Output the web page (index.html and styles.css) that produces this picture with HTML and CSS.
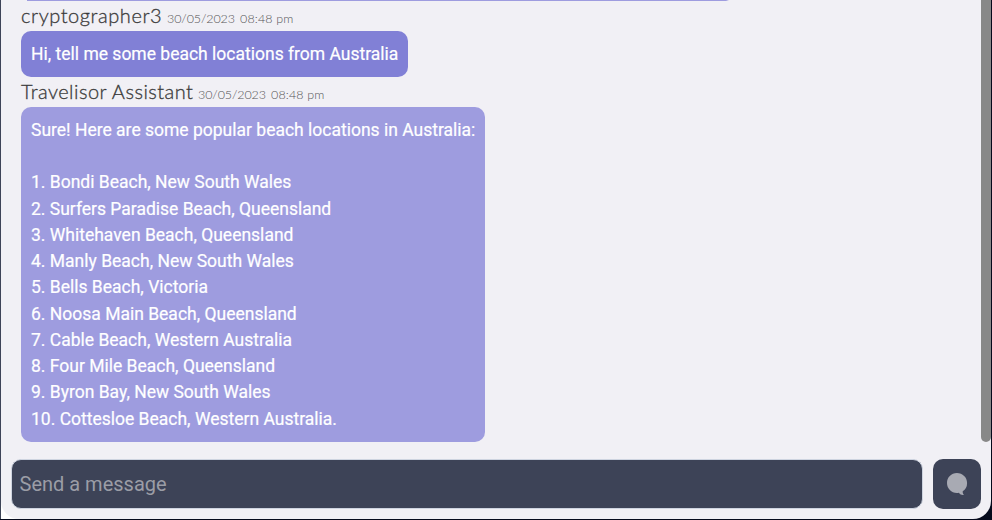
FILE: index.html
```
<!DOCTYPE html>
<html lang="en">
<head>
<meta charset="utf-8">
<title>Travelisor Chat</title>
<link rel="stylesheet" href="styles.css">
</head>
<body>
<div class="backdrop">
<main class="chat">
  <div class="history">
    <div class="messages">
      <div class="previous"></div>
      <header class="meta"><span class="name user">cryptographer3</span><span class="date">30/05/2023</span><span class="time">08:48 pm</span></header>
      <p class="bubble question">Hi, tell me some beach locations from Australia</p>
      <header class="meta"><span class="name assistant">Travelisor Assistant</span><span class="date">30/05/2023</span><span class="time">08:48 pm</span></header>
      <p class="bubble answer">Sure! Here are some popular beach locations in Australia:

1. Bondi Beach, New South Wales
2. Surfers Paradise Beach, Queensland
3. Whitehaven Beach, Queensland
4. Manly Beach, New South Wales
5. Bells Beach, Victoria
6. Noosa Main Beach, Queensland
7. Cable Beach, Western Australia
8. Four Mile Beach, Queensland
9. Byron Bay, New South Wales
10. Cottesloe Beach, Western Australia.</p>
    </div>
    <div class="scrollbar"></div>
  </div>
  <form class="composer">
    <input class="field" type="text" placeholder="Send a message" aria-label="Message">
    <button class="send" type="button" aria-label="Send">
      <svg width="22" height="24" viewBox="0 0 22 24"><path d="M10.900 1C5.300 1 1 5.400 1 10.900s4.300 10 9.900 10c.7 0 1.400-.1 2-.2 1.200 1.700 3 2.600 5.300 2.100-1.100-.7-1.600-1.900-1.500-3.600a10 10 0 0 0 4.400-8.300C21.100 5.400 16.600 1 10.900 1Z"/></svg>
    </button>
  </form>
</main>
</div>
</body>
</html>
```
FILE: styles.css
```
* { box-sizing: border-box; }
body { margin: 0; font-family: Roboto, sans-serif; overflow: hidden; }
.backdrop {
  height: 520px;
  padding: 0 1px 1px 0;
  background: linear-gradient(90deg, #fff 50%, #050a1c 50%);
  border-left: 1px solid #3d4357;
  position: relative;
}
.backdrop::after {
  content: "";
  position: absolute;
  inset: auto 0 0 -1px;
  height: 1px;
  background: #050a1c;
}
.chat {
  height: 519px;
  background: #f1f0f5;
  border-radius: 0 0 18px 18px;
  display: flex;
  flex-direction: column;
}
.history { height: 442px; display: flex; justify-content: space-between; }
.messages { padding-left: 20px; }
.previous { width: 714px; height: 1px; background: linear-gradient(90deg, transparent 6px, #9e9cdf 6px, #9e9cdf 705px, transparent 708px); }
.scrollbar { width: 10px; height: 442px; background: #888; border-radius: 0 0 5px 5px; }
.meta {
  height: 30px;
  display: flex;
  align-items: baseline;
  line-height: 28px;
  font-family: Lato, sans-serif;
  font-weight: 300;
  color: #333;
  white-space: pre;
}
.name { font-size: 20px; margin-right: 5px; -webkit-text-stroke: .3px #444; }
.user { width: 141px; letter-spacing: .57px; }
.assistant { width: 172px; letter-spacing: .47px; }
.date, .time { font-size: 12.5px; color: #555; }
.date { width: 73px; letter-spacing: -.1px; }
.time { letter-spacing: .15px; }
.bubble {
  width: fit-content;
  margin: 0;
  padding: 10px;
  border-radius: 10px;
  color: #fff;
  font-size: 17.5px;
  line-height: 26.25px;
  white-space: pre;
  -webkit-text-stroke: .2px #fff;
}
.question { width: 387px; height: 45.9px; background: #8180d6; }
.answer { width: 464px; height: 335px; background: #9e9cdf; }
.composer { display: flex; gap: 10px; margin: 17px 10px 0; height: 50px; }
.field {
  flex: 1;
  min-width: 0;
  border: 1px solid #ced4e0;
  border-radius: 10px;
  background: #3d4357;
  padding: 0 7.5px;
  font: 20px Roboto, sans-serif;
  color: #fff;
}
.field::placeholder { color: #9b9da6; opacity: 1; }
.send {
  width: 48px;
  padding: 0;
  border: 0;
  border-radius: 10px;
  background: #3d4357;
  display: flex;
  align-items: center;
  justify-content: center;
}
.send svg { fill: #a8aab3; }
```
